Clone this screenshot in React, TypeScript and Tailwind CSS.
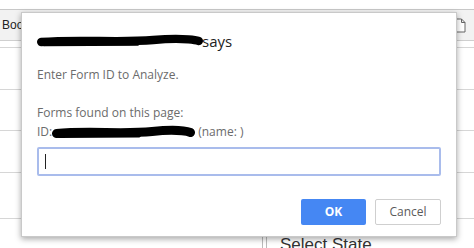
import React from "react";

const font = { fontFamily: '"Open Sans", "Noto Sans", sans-serif' };

function Scribble({ width, height }: { width: number; height: number }) {
  // black marker redaction
  const t = height * 0.6;
  const m = height / 2;
  return (
    <svg width={width} height={height} viewBox={`0 0 ${width} ${height}`} className="shrink-0">
      <path
        d={`M${t / 2} ${m + 1} C ${width * 0.25} ${m - 2}, ${width * 0.5} ${m + 2}, ${width * 0.7} ${m - 1} S ${width - t / 2} ${m}, ${width - t / 2} ${m}`}
        fill="none"
        stroke="#000"
        strokeWidth={t}
        strokeLinecap="round"
      />
      <path d={`M${width * 0.05} ${m + 2} L ${width * 0.6} ${m + 1.5}`} stroke="#000" strokeWidth={t * 0.8} strokeLinecap="round" />
    </svg>
  );
}

export default function App() {
  return (
    <div className="relative w-[474px] h-[248px] overflow-hidden bg-white" style={font}>
      {/* page behind the dialog */}
      <div className="h-[10px] border-b border-[#c8c8c8]" />
      <div className="h-[31px] bg-[#f2f2f2] border-b border-[#cfcfcf] flex items-center justify-between px-[2px]">
        <span className="text-[12px] text-[#222]" style={{ fontFamily: '"Liberation Sans", sans-serif' }}>Boo</span>
        <svg width="12" height="15" viewBox="0 0 12 15" className="mr-[6px]">
          <path d="M1 1 H7.5 L11 4.5 V14 H1 Z M7.5 1 V4.5 H11" fill="#fff" stroke="#666" strokeWidth="1" />
        </svg>
      </div>
      <div className="h-[6px]" />
      <div className="h-[43px] border-t border-b border-[#d6d6d6]" />
      <div className="h-[41px] border-b border-[#d6d6d6]" />
      <div className="h-[42px] border-b border-[#d6d6d6]" />
      <div className="h-[46px] border-b border-[#d6d6d6]" />
      <div className="flex h-[40px]">
        <div className="w-[262px]" />
        <div className="w-[5px] border-l border-r border-[#bbb] mt-[14px]" />
        <div className="pl-[13px] pt-[16px] text-[17px] leading-[20px] text-[#333]" style={{ fontFamily: '"Liberation Sans", sans-serif' }}>
          Select State
        </div>
      </div>

      {/* alert dialog */}
      <div className="absolute left-[21px] top-[12px] w-[436px] h-[225px] bg-white border border-[#c9c9c9] shadow-[0_2px_6px_rgba(0,0,0,0.35)] px-[15px]">
        <div className="flex items-center h-[20px] mt-[18px] text-[15px] text-[#222]">
          <Scribble width={166} height={14} />
          <span className="-ml-[1px]">says</span>
        </div>
        <div className="mt-[16px] text-[12px] leading-[16px] text-[#6b6b6b]">Enter Form ID to Analyze.</div>
        <div className="mt-[22px] text-[12px] leading-[16px] text-[#6b6b6b]">Forms found on this page:</div>
        <div className="mt-[3px] flex items-center h-[16px] text-[12px] leading-[16px] text-[#6b6b6b]">
          <span>ID:</span>
          <Scribble width={143} height={15} />
          <span className="ml-[3px]">(name: )</span>
        </div>
        <div className="mt-[7px] h-[29px] border-2 border-[#a9bcec] rounded-[2px] flex items-center pl-[6px]">
          <div className="w-[1px] h-[15px] bg-[#222]" />
        </div>
        <div className="mt-[23px] flex justify-end gap-[9px]">
          <button className="w-[65px] h-[26px] bg-[#4587f3] rounded-[2px] text-white text-[12px] font-bold">OK</button>
          <button className="w-[66px] h-[26px] bg-white border border-[#cfcfcf] rounded-[2px] text-[#5a5a5a] text-[12px]">Cancel</button>
        </div>
      </div>
    </div>
  );
}
